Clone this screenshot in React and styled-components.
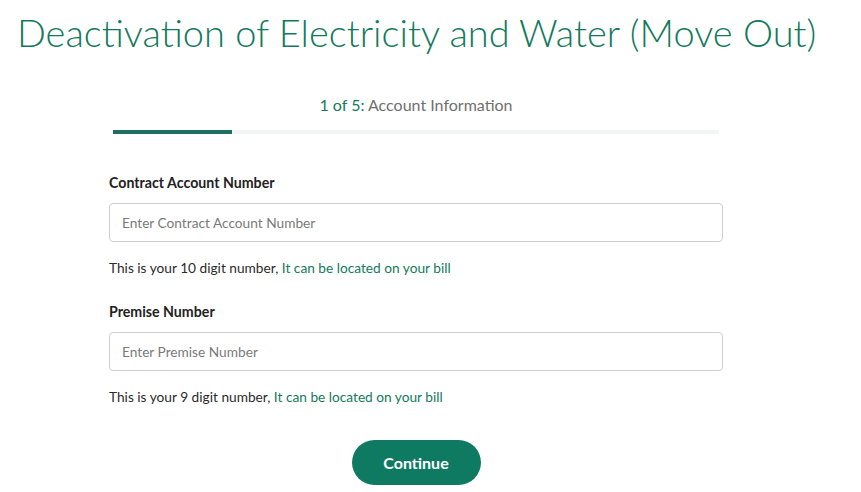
import React from "react";
import styled, { createGlobalStyle } from "styled-components";

const GlobalStyle = createGlobalStyle`
  * { box-sizing: border-box; }
  body {
    margin: 0;
    background: #ffffff;
    font-family: Lato, "Open Sans", "Liberation Sans", sans-serif;
  }
`;

const Page = styled.div`
  width: 832px;
  padding-top: 6px;
`;

const Title = styled.h1`
  margin: 0 0 0 17px;
  font-size: 38px;
  font-weight: 300;
  color: #137a5c;
  line-height: 52px;
  white-space: nowrap;
`;

const Stepper = styled.div`
  width: 606px;
  margin: 37px auto 0;
  display: flex;
  flex-direction: column;
  align-items: center;
`;

const StepLabel = styled.div`
  font-size: 16px;
  line-height: 20px;
  color: #6f6f6f;

  span {
    color: #137a5c;
  }
`;

const Track = styled.div`
  width: 100%;
  height: 4px;
  margin-top: 15px;
  background: #f3f4f5;
`;

const Fill = styled.div`
  height: 100%;
  background: #1d6e63;
`;

const Form = styled.form`
  width: 614px;
  margin: 40px auto 0;
  display: flex;
  flex-direction: column;
`;

const Field = styled.div`
  display: flex;
  flex-direction: column;
  margin-bottom: ${(p) => p.$gap || 0}px;
`;

const Label = styled.label`
  font-size: 14.2px;
  font-weight: 700;
  color: #222;
  line-height: 18px;
`;

const Input = styled.input`
  margin-top: 11px;
  height: 39px;
  border: 1px solid #cfcfcf;
  border-radius: 4px;
  padding: 0 12px;
  font-family: inherit;
  font-size: 13.7px;
  color: #333;
  outline: none;

  &::placeholder {
    color: #7a7a7a;
  }
`;

const Help = styled.p`
  margin: 17px 0 0;
  font-size: 13.7px;
  line-height: 18px;
  color: #2b2b2b;

  a {
    color: #137a5c;
    text-decoration: none;
  }
`;

const Actions = styled.div`
  display: flex;
  justify-content: center;
  margin-top: 34px;
`;

const Button = styled.button`
  width: 129px;
  height: 45px;
  border: none;
  border-radius: 23px;
  background: #0f7a62;
  color: #ffffff;
  font-family: inherit;
  font-size: 16px;
  font-weight: 700;
  cursor: pointer;
`;

const fields = [
  {
    id: "ca",
    label: "Contract Account Number",
    placeholder: "Enter Contract Account Number",
    digits: 10,
  },
  {
    id: "premise",
    label: "Premise Number",
    placeholder: "Enter Premise Number",
    digits: 9,
  },
];

export default function App() {
  const step = 1;
  const total = 5;

  return (
    <>
      <GlobalStyle />
      <Page>
        <Title>Deactivation of Electricity and Water (Move Out)</Title>
        <Stepper>
          <StepLabel>
            <span>
              {step} of {total}:
            </span>{" "}
            Account Information
          </StepLabel>
          <Track>
            <Fill style={{ width: `${(step / total) * 100 - 0.4}%` }} />
          </Track>
        </Stepper>
        <Form onSubmit={(e) => e.preventDefault()}>
          {fields.map((f, i) => (
            <Field key={f.id} $gap={i === 0 ? 26 : 0}>
              <Label htmlFor={f.id}>{f.label}</Label>
              <Input id={f.id} placeholder={f.placeholder} />
              <Help>
                This is your {f.digits} digit number,{" "}
                <a href="#bill">It can be located on your bill</a>
              </Help>
            </Field>
          ))}
          <Actions>
            <Button type="submit">Continue</Button>
          </Actions>
        </Form>
      </Page>
    </>
  );
}
